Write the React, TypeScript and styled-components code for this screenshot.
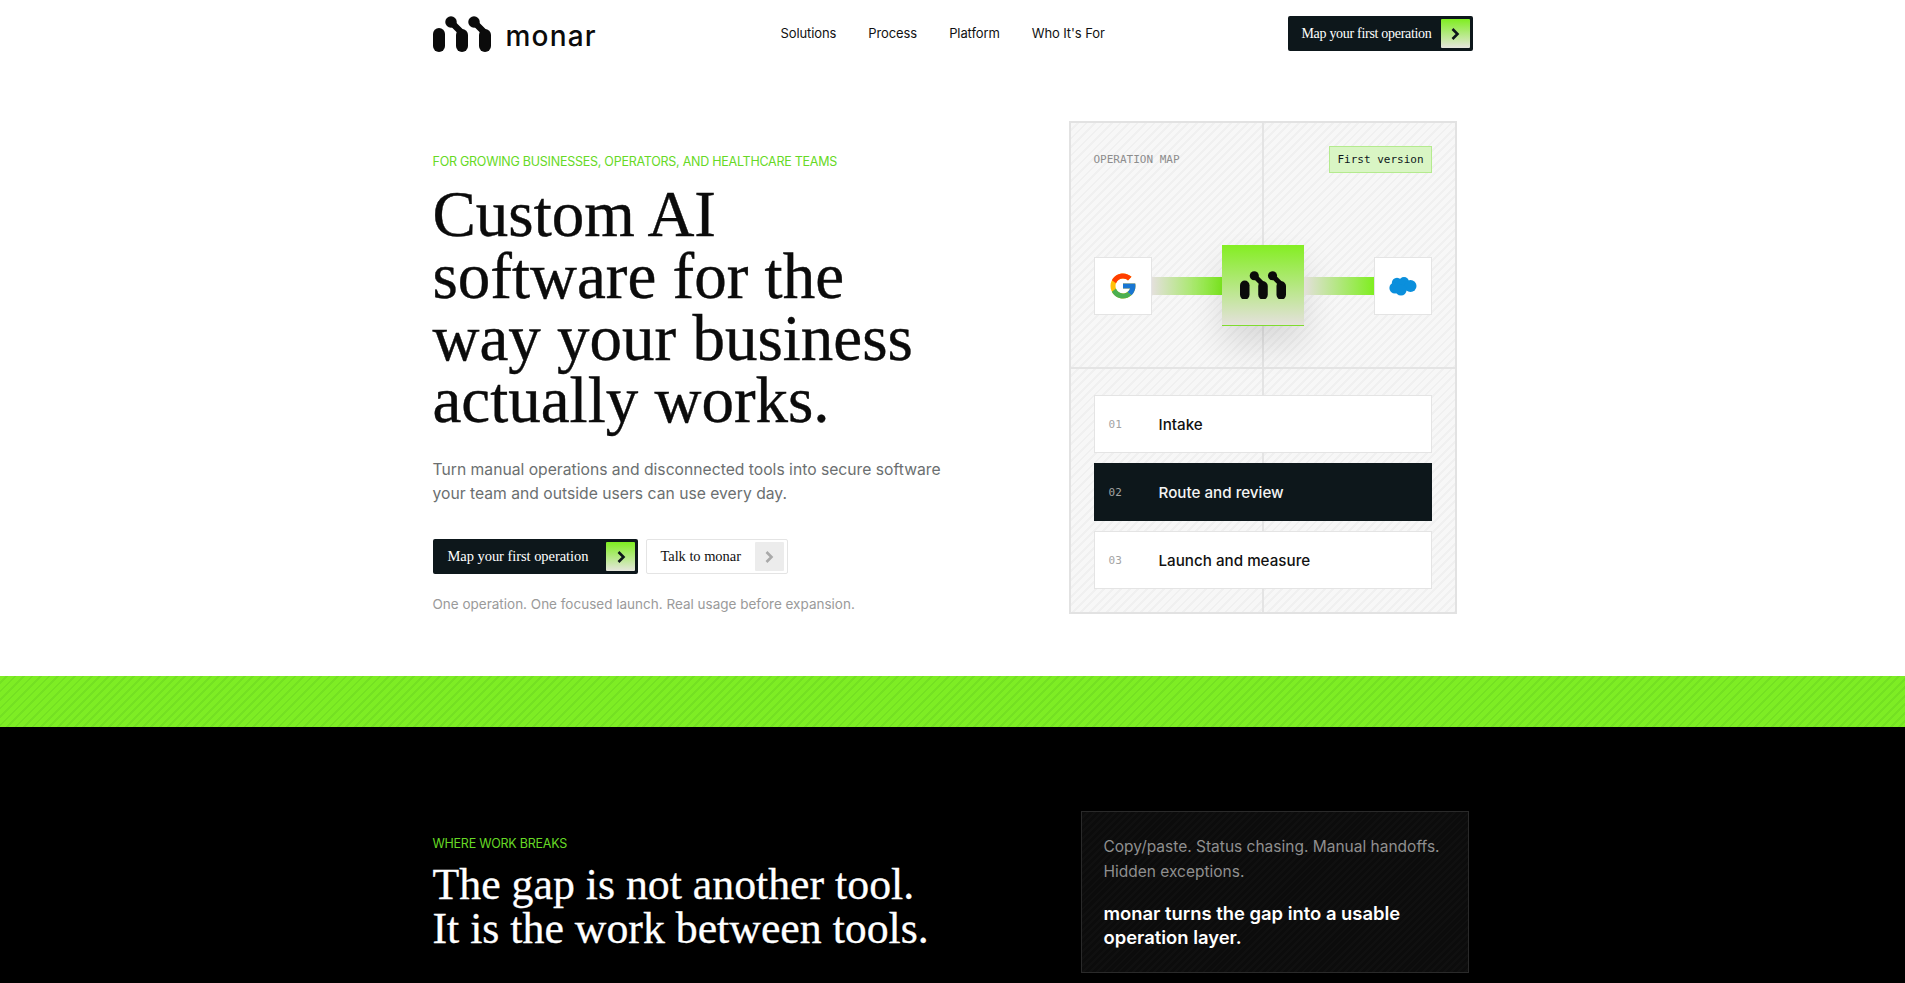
import styled, { createGlobalStyle } from "styled-components";
import { FcGoogle } from "react-icons/fc";

const sans = `"Inter", "Liberation Sans", sans-serif`;
const serif = `"Liberation Serif", "Times New Roman", serif`;
const mono = `"DejaVu Sans Mono", "Liberation Mono", monospace`;

const GlobalStyle = createGlobalStyle`
  html, body {
    margin: 0;
    padding: 0;
    background: #fff;
    overflow-x: hidden;
  }
  * {
    box-sizing: border-box;
  }
`;

const Container = styled.div`
  width: 1040px;
  margin: 0 auto;
`;

const Header = styled.header`
  height: 67px;
  padding-top: 16px;
`;

const HeaderRow = styled(Container)`
  display: grid;
  grid-template-columns: 348px 1fr auto;
  align-items: start;
`;

const Brand = styled.div`
  display: flex;
  align-items: center;
  gap: 15px;
`;

const Wordmark = styled.span`
  font-family: ${sans};
  font-size: 28px;
  font-weight: 500;
  letter-spacing: 1.2px;
  color: #0b0b0b;
  line-height: 1;
  padding-top: 4px;
`;

const Nav = styled.nav`
  display: flex;
  gap: 32px;
  align-self: center;
  padding-bottom: 2px;
`;

const NavLink = styled.a`
  font-family: ${sans};
  font-size: 13px;
  letter-spacing: -0.1px;
  color: #111;
`;

const Button = styled.a<{ $variant?: "dark" | "light" | "compact" }>`
  display: inline-flex;
  align-items: center;
  justify-content: space-between;
  height: 35px;
  padding: 0 3px 0 ${(p) => (p.$variant === "compact" ? 13 : p.$variant === "light" ? 13 : 15)}px;
  gap: ${(p) => (p.$variant === "compact" ? 9 : p.$variant === "light" ? 14 : 18)}px;
  border-radius: 2px;
  font-family: ${serif};
  font-size: ${(p) => (p.$variant === "compact" ? 14 : 14.5)}px;
  letter-spacing: ${(p) => (p.$variant === "compact" ? -0.3 : -0.05)}px;
  background: ${(p) => (p.$variant === "light" ? "#fff" : "#0d171b")};
  color: ${(p) => (p.$variant === "light" ? "#111" : "#fff")};
  border: ${(p) => (p.$variant === "light" ? "1px solid #e4e4e4" : "none")};
`;

const Chip = styled.span<{ $muted?: boolean }>`
  display: flex;
  align-items: center;
  justify-content: center;
  width: 29px;
  height: 29px;
  border-radius: 1px;
  background: ${(p) => (p.$muted ? "#ececec" : "linear-gradient(180deg, #7fee20 0%, #e6e6de 100%)")};
  color: ${(p) => (p.$muted ? "#a9a9a9" : "#0d171b")};
`;

const Hero = styled(Container)`
  display: grid;
  grid-template-columns: 1fr 388px;
  padding: 54px 16px 62px 0;
`;

const HeroCopy = styled.div`
  padding-top: 32px;
`;

const Eyebrow = styled.div`
  font-family: ${sans};
  font-size: 12.5px;
  letter-spacing: -0.25px;
  line-height: 18px;
  text-transform: uppercase;
  color: #66d925;
`;

const Title = styled.h1`
  margin: 12px 0 0;
  font-family: ${serif};
  font-weight: 400;
  font-size: 65px;
  line-height: 62px;
  color: #0b0b0b;
  -webkit-text-stroke: 0.4px #0b0b0b;
`;

const Lede = styled.p`
  margin: 27px 0 0;
  width: 530px;
  font-family: ${sans};
  font-size: 15.7px;
  line-height: 24px;
  color: #6b6f70;
`;

const Actions = styled.div`
  display: flex;
  gap: 8px;
  margin-top: 33px;
`;

const Note = styled.p`
  margin: 20px 0 0;
  font-family: ${sans};
  font-size: 13.5px;
  line-height: 20px;
  color: #9a9a9a;
`;

const stripes = `repeating-linear-gradient(135deg, #f7f7f7 0 4px, #f0f0f0 4px 6px)`;

const MapPanel = styled.aside`
  height: 493px;
  border: 2px solid #e2e2e2;
  background: linear-gradient(#e4e4e4, #e4e4e4) center / 2px 100% no-repeat, ${stripes};
  display: flex;
  flex-direction: column;
`;

const MapTop = styled.div`
  height: 246px;
  padding: 23px 23px 0;
  border-bottom: 2px solid #e4e4e4;
`;

const MapHead = styled.div`
  display: flex;
  justify-content: space-between;
  align-items: center;
`;

const MapLabel = styled.span`
  font-family: ${mono};
  font-size: 11px;
  color: #8d8d8d;
`;

const Badge = styled.span`
  display: flex;
  align-items: center;
  height: 27px;
  padding: 0 7px;
  font-family: ${mono};
  font-size: 11px;
  color: #0d171b;
  background: #d9f5c4;
  border: 1px solid #b4ea8e;
`;

const Flow = styled.div`
  display: flex;
  align-items: center;
  margin-top: 72px;
`;

const LogoBox = styled.div`
  display: flex;
  align-items: center;
  justify-content: center;
  width: 58px;
  height: 58px;
  background: #fff;
  border: 1px solid #e4e4e4;
  flex: none;
`;

const Connector = styled.div`
  flex: 1;
  height: 18px;
  background: linear-gradient(90deg, #e4e0dc 0%, #7fee20 100%);
`;

const Hub = styled.div`
  display: flex;
  align-items: center;
  justify-content: center;
  flex: none;
  width: 82px;
  height: 81px;
  background: linear-gradient(180deg, #84ee22 0%, #e4e1dc 100%);
  border-bottom: 1px solid #7fdc2e;
  box-shadow: 0 18px 34px rgba(0, 0, 0, 0.12);
`;

const Steps = styled.div`
  display: flex;
  flex-direction: column;
  gap: 10px;
  padding: 26px 23px 0;
`;

const Step = styled.div<{ $active?: boolean }>`
  display: flex;
  align-items: center;
  height: 58px;
  padding-left: 14px;
  background: ${(p) => (p.$active ? "#0d171b" : "#fff")};
  border: 1px solid ${(p) => (p.$active ? "#0d171b" : "#e4e4e4")};
  color: ${(p) => (p.$active ? "#f4f4f4" : "#111")};
`;

const StepNum = styled.span`
  width: 50px;
  font-family: ${mono};
  font-size: 11px;
  color: #a3a3a3;
`;

const StepName = styled.span`
  font-family: ${sans};
  font-size: 15.2px;
  font-weight: 500;
`;

const Band = styled.div`
  height: 51px;
  background: repeating-linear-gradient(135deg, #7eed24 0 4px, #74e122 4px 6px);
`;

const Dark = styled.section`
  background: #000;
  padding: 84px 0 70px;
`;

const DarkRow = styled(Container)`
  display: grid;
  grid-template-columns: 1fr 388px;
  padding-right: 4px;
`;

const DarkCopy = styled.div`
  padding-top: 24px;
`;

const DarkTitle = styled.h2`
  margin: 9px 0 0;
  font-family: ${serif};
  font-weight: 400;
  font-size: 43.8px;
  line-height: 44px;
  color: #fff;
  -webkit-text-stroke: 0.3px #fff;
`;

const GapCard = styled.div`
  height: 162px;
  padding: 22px 16px 0 22px;
  border: 1px solid #2a2a2a;
  background: repeating-linear-gradient(135deg, #0c0c0c 0 3px, #101010 3px 5px);
`;

const GapText = styled.p`
  margin: 0;
  font-family: ${sans};
  font-size: 15.5px;
  line-height: 25px;
  color: #8f8f8f;
`;

const GapStrong = styled.p`
  margin: 17px 0 0;
  width: 320px;
  font-family: ${sans};
  font-size: 18.4px;
  font-weight: 600;
  line-height: 24px;
  color: #fff;
`;

function MonarMark({ size = 58, color = "#0b0b0b" }: { size?: number; color?: string }) {
  return (
    <svg width={size} height={(size * 36) / 58} viewBox="0 0 58 36" fill="none">
      <g stroke={color} strokeLinecap="round">
        <path d="M6 18V30" strokeWidth="12" />
        <path d="M18 6V6" strokeWidth="11.5" />
        <path d="M18 6L29 17" strokeWidth="6.5" />
        <path d="M29 19V30" strokeWidth="12" />
        <path d="M41 6V6" strokeWidth="11.5" />
        <path d="M41 6L52 17" strokeWidth="6.5" />
        <path d="M52 19V30" strokeWidth="12" />
      </g>
    </svg>
  );
}

function Chevron({ size = 14 }: { size?: number }) {
  return (
    <svg width={size} height={size} viewBox="0 0 14 14" fill="none">
      <path d="M4.5 2L9.5 7L4.5 12" stroke="currentColor" strokeWidth="2.6" />
    </svg>
  );
}

function SalesforceCloud() {
  return (
    <svg width="28" height="20" viewBox="0 0 28 20" fill="#0b8fdc">
      <circle cx="8" cy="7" r="5.2" />
      <circle cx="15" cy="6" r="5" />
      <circle cx="21.5" cy="10" r="6" />
      <circle cx="6" cy="12" r="5.6" />
      <circle cx="12" cy="14" r="5.6" />
    </svg>
  );
}

const steps = ["Intake", "Route and review", "Launch and measure"];

export default function App() {
  return (
    <>
      <GlobalStyle />
      <Header>
        <HeaderRow>
          <Brand>
            <MonarMark />
            <Wordmark>monar</Wordmark>
          </Brand>
          <Nav>
            <NavLink>Solutions</NavLink>
            <NavLink>Process</NavLink>
            <NavLink>Platform</NavLink>
            <NavLink>Who It's For</NavLink>
          </Nav>
          <Button $variant="compact">
            Map your first operation
            <Chip>
              <Chevron />
            </Chip>
          </Button>
        </HeaderRow>
      </Header>

      <Hero>
        <HeroCopy>
          <Eyebrow>For growing businesses, operators, and healthcare teams</Eyebrow>
          <Title>
            Custom AI
            <br />
            software for the
            <br />
            way your business
            <br />
            actually works.
          </Title>
          <Lede>
            Turn manual operations and disconnected tools into secure software your team and outside users can use every day.
          </Lede>
          <Actions>
            <Button>
              Map your first operation
              <Chip>
                <Chevron />
              </Chip>
            </Button>
            <Button $variant="light">
              Talk to monar
              <Chip $muted>
                <Chevron />
              </Chip>
            </Button>
          </Actions>
          <Note>One operation. One focused launch. Real usage before expansion.</Note>
        </HeroCopy>

        <MapPanel>
          <MapTop>
            <MapHead>
              <MapLabel>OPERATION MAP</MapLabel>
              <Badge>First version</Badge>
            </MapHead>
            <Flow>
              <LogoBox>
                <FcGoogle size={30} />
              </LogoBox>
              <Connector />
              <Hub>
                <MonarMark size={46} color="#0a0a0a" />
              </Hub>
              <Connector />
              <LogoBox>
                <SalesforceCloud />
              </LogoBox>
            </Flow>
          </MapTop>
          <Steps>
            {steps.map((name, index) => (
              <Step key={name} $active={index === 1}>
                <StepNum>0{index + 1}</StepNum>
                <StepName>{name}</StepName>
              </Step>
            ))}
          </Steps>
        </MapPanel>
      </Hero>

      <Band />

      <Dark>
        <DarkRow>
          <DarkCopy>
            <Eyebrow>Where work breaks</Eyebrow>
            <DarkTitle>
              The gap is not another tool.
              <br />
              It is the work between tools.
            </DarkTitle>
          </DarkCopy>
          <GapCard>
            <GapText>Copy/paste. Status chasing. Manual handoffs. Hidden exceptions.</GapText>
            <GapStrong>monar turns the gap into a usable operation layer.</GapStrong>
          </GapCard>
        </DarkRow>
      </Dark>
    </>
  );
}
